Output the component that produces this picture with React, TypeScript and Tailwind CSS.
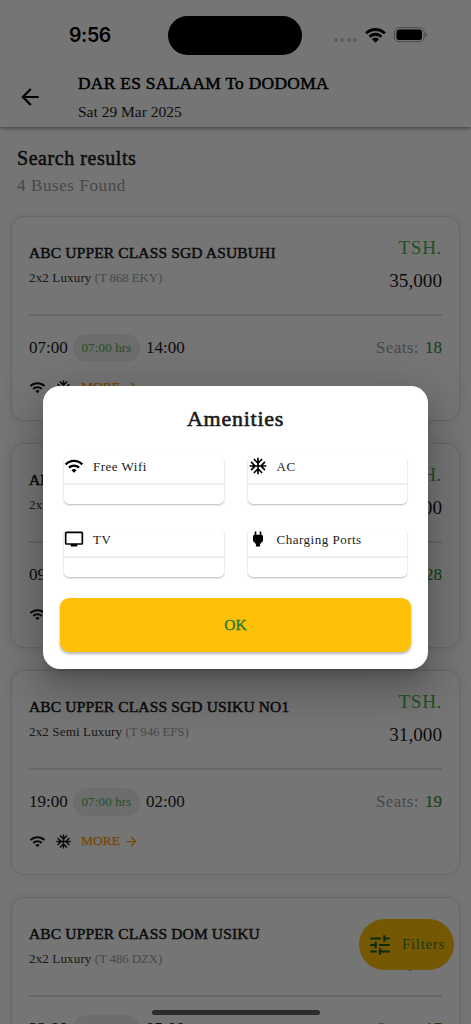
import type { ReactNode } from "react";
import {
  MdAcUnit,
  MdArrowBack,
  MdArrowForward,
  MdPower,
  MdTune,
  MdTv,
  MdWifi,
} from "react-icons/md";

type Bus = {
  name: string;
  layout: string;
  plate: string;
  price: string;
  departs: string;
  duration: string;
  arrives: string;
  seats: number;
};

const buses: Bus[] = [
  {
    name: "ABC UPPER CLASS SGD ASUBUHI",
    layout: "2x2 Luxury",
    plate: "(T 868 EKY)",
    price: "35,000",
    departs: "07:00",
    duration: "07:00 hrs",
    arrives: "14:00",
    seats: 18,
  },
  {
    name: "ABC UPPER CLASS DOM ASUBUHI",
    layout: "2x2 Luxury",
    plate: "(T 487 DZX)",
    price: "35,000",
    departs: "09:00",
    duration: "07:00 hrs",
    arrives: "16:00",
    seats: 28,
  },
  {
    name: "ABC UPPER CLASS SGD USIKU NO1",
    layout: "2x2 Semi Luxury",
    plate: "(T 946 EFS)",
    price: "31,000",
    departs: "19:00",
    duration: "07:00 hrs",
    arrives: "02:00",
    seats: 19,
  },
  {
    name: "ABC UPPER CLASS DOM USIKU",
    layout: "2x2 Luxury",
    plate: "(T 486 DZX)",
    price: "35,000",
    departs: "22:00",
    duration: "07:00 hrs",
    arrives: "05:00",
    seats: 17,
  },
];

function StatusBar() {
  return (
    <div className="relative z-30 flex h-[70px] items-center">
      <span className="mt-[2px] ml-[69px] w-[99px] font-['Inter'] text-[19.5px] font-semibold tracking-[-0.4px] text-black">
        9:56
      </span>
      <div className="h-[39px] w-[134px] rounded-full bg-black" />
      <div className="ml-8 mt-[10px] flex gap-[2.4px]">
        {[0, 1, 2, 3].map((dot) => (
          <span key={dot} className="size-1 rounded-full bg-[#5c5c5c]" />
        ))}
      </div>
      <svg className="ml-2 h-[15px] w-[21px]" viewBox="0 0 21 15">
        <path
          d="M10.5 0C6.700 0 3.200 1.500.6 4c-.3.300-.3.600 0 .9l1.200 1.200c.2.200.5.200.8 0C4.700 4.100 7.500 2.900 10.500 2.900s5.800 1.200 7.900 3.200c.3.200.6.200.8 0l1.200-1.200c.3-.3.3-.6 0-.9C17.800 1.500 14.300 0 10.500 0z"
          fill="#000"
        />
        <path
          d="M10.500 4.800c-2.500 0-4.800 1-6.500 2.600-.3.300-.3.600 0 .9l1.300 1.300c.2.200.5.200.8 0 1.200-1.100 2.700-1.800 4.400-1.800s3.200.7 4.400 1.800c.3.200.6.200.8 0L17 8.300c.3-.3.300-.6 0-.9-1.700-1.600-4-2.600-6.500-2.600z"
          fill="#000"
        />
        <path
          d="M10.500 9.600c-1.200 0-2.300.4-3.100 1.200-.3.200-.3.500 0 .8l2.700 2.700c.2.200.6.200.8 0l2.700-2.700c.3-.3.300-.6 0-.8-.8-.8-1.900-1.200-3.100-1.200z"
          fill="#000"
        />
      </svg>
      <svg className="ml-2 h-4 w-[34px]" viewBox="0 0 34 16">
        <rect x=".5" y=".7" width="29.6" height="14" rx="4.500" fill="none" stroke="#4a4a4a" />
        <rect x="2.500" y="2.600" width="25.500" height="10.400" rx="2.800" fill="#000" />
        <path d="M31.500 5.500c1.900.6 1.900 4.200 0 4.800z" fill="#4a4a4a" />
      </svg>
    </div>
  );
}

function BusCard({ bus }: { bus: Bus }) {
  return (
    <li className="h-[205px] rounded-[13px] border border-[#e0e0e0] bg-white px-[17px] pt-[14px] shadow-[0_0_12px_rgba(0,0,0,0.07)]">
      <div className="flex h-[68px] justify-between whitespace-nowrap">
        <div className="pt-[10px]">
          <p className="h-6 text-[15.5px] leading-6 tracking-[0.14px] text-[#1a1a1a] [-webkit-text-stroke:0.5px]">
            {bus.name}
          </p>
          <p className="mt-[3px] text-[13px] leading-5 text-[#333]">
            <span className="tracking-[0.15px]">{bus.layout}</span>{" "}
            <span className="tracking-[-0.15px] text-[#9e9e9e]">{bus.plate}</span>
          </p>
        </div>
        <div className="text-right text-[19.2px] leading-[33px]">
          <p className="tracking-[0.6px] text-[#4caf50]">TSH.</p>
          <p className="text-[#1a1a1a]">{bus.price}</p>
        </div>
      </div>
      <div className="mt-[15px] h-[2px] bg-[#e0e0e0]" />
      <div className="mt-[18px] flex h-7 items-center text-[17px] text-[#1a1a1a]">
        <span className="w-[44px]">{bus.departs}</span>
        <span className="flex h-7 w-[67px] items-center justify-center rounded-full bg-[#eee] text-[13px] tracking-[0.15px] text-[#4caf50]">
          {bus.duration}
        </span>
        <span className="ml-[6px]">{bus.arrives}</span>
        <span className="ml-auto tracking-[0.4px] text-[#9e9e9e]">Seats:</span>
        <span className="ml-[6px] text-[#388e3c] [-webkit-text-stroke:0.2px]">{bus.seats}</span>
      </div>
      <div className="mt-4 flex h-[18px] items-center text-[#111]">
        <MdWifi size={17} />
        <MdAcUnit className="ml-[9px]" size={17} />
        <span className="ml-[9px] text-[13.5px] text-[#ff9800] [-webkit-text-stroke:0.25px]">
          MORE
        </span>
        <MdArrowForward className="ml-1 text-[#ff9800]" size={15} />
      </div>
    </li>
  );
}

function Amenity({ icon, label }: { icon: ReactNode; label: string }) {
  return (
    <div className="h-12 rounded-[5px] bg-white shadow-[0_1px_2px_rgba(0,0,0,0.28)]">
      <div className="flex h-[29.5px] items-start border-b-2 border-[#eee]">
        <span className="flex h-5 w-5 items-center justify-center">{icon}</span>
        <span className="ml-[9px] text-[13px] leading-[21px] tracking-[0.5px]">{label}</span>
      </div>
    </div>
  );
}

function AmenitiesDialog() {
  return (
    <div className="w-[385px] rounded-[17px] bg-white px-[17px] pt-[17px] text-[#1a1a1a] shadow-[0_11px_15px_-7px_rgba(0,0,0,0.2),0_24px_38px_3px_rgba(0,0,0,0.14),0_9px_46px_8px_rgba(0,0,0,0.12)]">
      <h2 className="text-center text-[22px] leading-8 tracking-[0.75px] [-webkit-text-stroke:0.6px]">
        Amenities
      </h2>
      <div className="mt-[21px] grid grid-cols-2 gap-x-6 gap-y-[25px] px-1">
        <Amenity icon={<MdWifi size={20} className="text-black" />} label="Free Wifi" />
        <Amenity icon={<MdAcUnit size={20} className="text-black" />} label="AC" />
        <Amenity icon={<MdTv size={20} className="text-black" />} label="TV" />
        <Amenity icon={<MdPower size={20} className="text-black" />} label="Charging Ports" />
      </div>
      <button className="mt-[21px] mb-[17px] flex h-[54px] w-full items-center justify-center rounded-[9px] bg-[#ffc107] text-[15.5px] text-[#2e7d32] shadow-[0_2px_3px_rgba(0,0,0,0.3)] [-webkit-text-stroke:0.45px]">
        OK
      </button>
    </div>
  );
}

export default function App() {
  return (
    <div className="relative h-[1024px] w-[471px] overflow-hidden bg-white font-['Liberation_Serif',serif]">
      <header className="relative h-[127px] bg-white shadow-[0_1px_4px_rgba(0,0,0,0.5)]">
        <StatusBar />
        <div className="flex h-[57px] text-black">
          <MdArrowBack size={26} className="mt-[14px] ml-[17px]" />
          <div className="ml-[35px]">
            <h1 className="text-[17.4px] leading-[27px] tracking-[0.3px] [-webkit-text-stroke:0.5px]">
              DAR ES SALAAM To DODOMA
            </h1>
            <p className="mt-[3px] text-[15.5px] leading-6 text-[#1a1a1a]">Sat 29 Mar 2025</p>
          </div>
        </div>
      </header>

      <main className="px-[11px]">
        <div className="h-[89px] pt-4 pl-[6px]">
          <h2 className="text-[20px] leading-[30px] tracking-[0.55px] text-[#1a1a1a] [-webkit-text-stroke:0.5px]">
            Search results
          </h2>
          <p className="text-[17px] leading-[26px] tracking-[0.6px] text-[#9e9e9e]">4 Buses Found</p>
        </div>
        <ul className="space-y-[22px]">
          {buses.map((bus) => (
            <BusCard key={bus.name} bus={bus} />
          ))}
        </ul>
      </main>

      <button className="absolute top-[919px] left-[359px] flex h-[51px] w-[94.5px] items-center rounded-full bg-[#ffc107] text-[#1b5e20]">
        <MdTune size={26} className="ml-2" />
        <span className="ml-[9px] text-[15px] tracking-[0.65px] text-[#2e7d32]">Filters</span>
      </button>

      <div className="absolute inset-0 flex items-start justify-center bg-black/54 pt-[385.5px]">
        <AmenitiesDialog />
      </div>
      <div className="absolute bottom-[9px] left-[152px] h-[5px] w-[168px] rounded-full bg-[#2b2b2b]" />
    </div>
  );
}
